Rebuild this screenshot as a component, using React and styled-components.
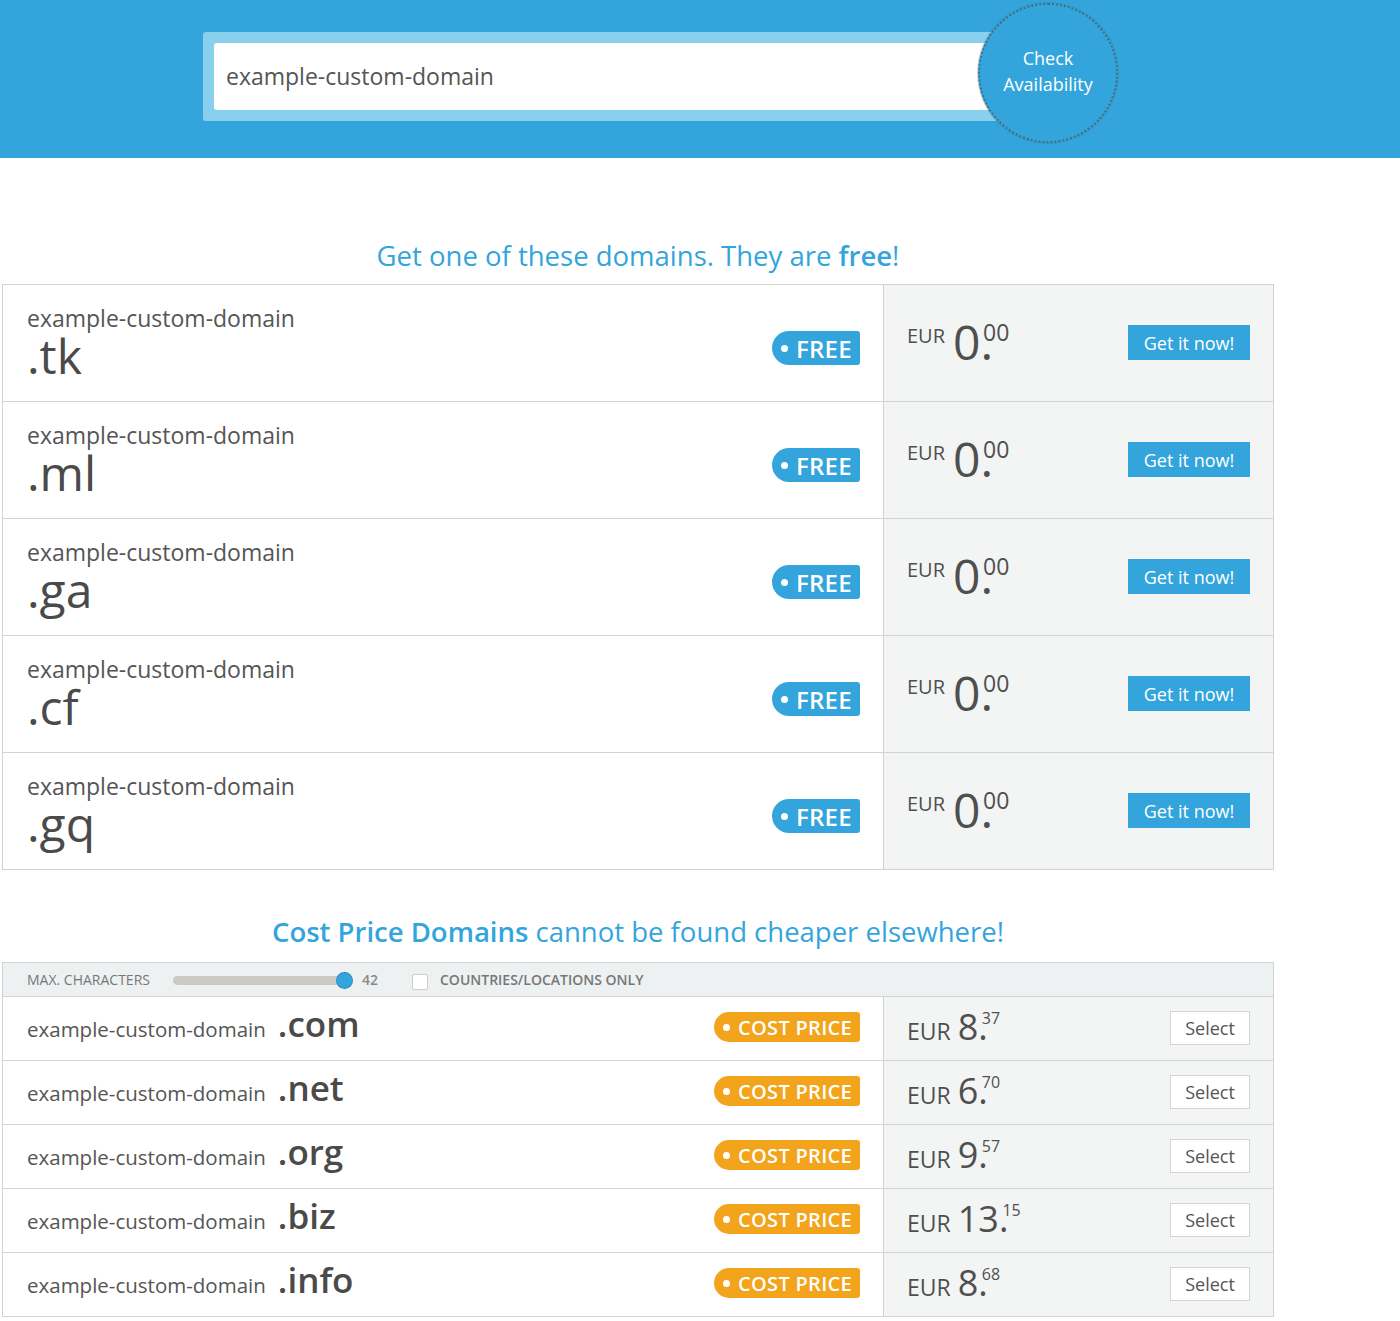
import React from "react";
import styled, { createGlobalStyle } from "styled-components";

const Global = createGlobalStyle`
  html, body { margin: 0; padding: 0; background: #fff; }
  body { font-family: "Open Sans", "Noto Sans", sans-serif; color: #555; }
  * { box-sizing: border-box; }
`;

const BLUE = "#33a5dc";
const ORANGE = "#f2a41c";

const Header = styled.header`
  height: 158px;
  background: ${BLUE};
  display: flex;
  align-items: center;
  padding-left: 203px;
`;

const SearchFrame = styled.div`
  width: 797px;
  height: 89px;
  margin-top: -6px;
  background: #88d0ee;
  border-radius: 3px;
  padding: 11px 10px 11px 11px;
`;

const SearchInput = styled.div`
  height: 100%;
  background: #fff;
  border-radius: 3px;
  display: flex;
  align-items: center;
  padding-left: 12px;
  font-size: 23px;
  color: #555;
`;

const CheckButton = styled.div`
  width: 140px;
  height: 140px;
  margin-left: -22px;
  margin-top: -12px;
  padding-bottom: 4px;
  border-radius: 50%;
  background: ${BLUE};
  border: 2px dotted rgba(70, 70, 70, 0.55);
  box-shadow: 0 0 0 1px rgba(90, 90, 90, 0.25);
  display: flex;
  align-items: center;
  justify-content: center;
  text-align: center;
  color: #fff;
  font-size: 18px;
  line-height: 26px;
  position: relative;
  z-index: 1;
`;

const Main = styled.main`
  width: 1274px;
  padding-left: 2px;
`;

const Heading = styled.h2`
  margin: ${(p) => p.$mt}px 0 ${(p) => p.$mb}px;
  text-align: center;
  font-weight: 400;
  font-size: 27.5px;
  line-height: 40px;
  color: ${BLUE};
  b { font-weight: 600; }
`;

const Table = styled.div`
  border-top: 1px solid #d2d2d2;
  border-left: 1px solid #d2d2d2;
  border-right: 1px solid #d2d2d2;
`;

const Row = styled.div`
  display: grid;
  grid-template-columns: 881px 1fr;
  height: ${(p) => p.$h}px;
  border-bottom: 1px solid #d2d2d2;
`;

const LeftCell = styled.div`
  display: flex;
  align-items: center;
  justify-content: space-between;
  padding: 0 23px 0 24px;
  border-right: 1px solid #d2d2d2;
  background: #fff;
`;

const NameStack = styled.div`
  display: flex;
  flex-direction: column;
  margin-bottom: 2px;
`;

const NameInline = styled.div`
  display: flex;
  align-items: baseline;
  gap: 12px;
  margin-bottom: 10px;
`;

const DomainName = styled.span`
  font-size: ${(p) => p.$size}px;
  line-height: ${(p) => p.$lh}px;
  color: #555;
`;

const Tld = styled.span`
  font-size: ${(p) => p.$size}px;
  line-height: ${(p) => p.$lh}px;
  font-weight: ${(p) => p.$weight};
  color: #4a4a4a;
`;

const Tag = styled.span`
  display: inline-flex;
  align-items: center;
  gap: 8px;
  height: ${(p) => p.$h}px;
  padding: 0 8px 0 9px;
  margin-top: ${(p) => p.$mt}px;
  background: ${(p) => p.$color};
  color: #fff;
  border-radius: ${(p) => p.$h / 2}px 3px 3px ${(p) => p.$h / 2}px;
  font-size: ${(p) => p.$fs}px;
  font-weight: 600;
  letter-spacing: 0.3px;
  &::before {
    content: "";
    width: 7px;
    height: 7px;
    border-radius: 50%;
    background: #fff;
  }
`;

const RightCell = styled.div`
  display: flex;
  align-items: center;
  justify-content: space-between;
  padding: 0 23px 0 23px;
  background: #f3f5f5;
`;

const Price = styled.div`
  display: flex;
  align-items: ${(p) => (p.$top ? "flex-start" : "baseline")};
  color: #4f4f4f;
  margin-bottom: ${(p) => p.$mb}px;
`;

const Currency = styled.span`
  font-size: ${(p) => p.$size}px;
  line-height: ${(p) => p.$lh}px;
  margin-right: ${(p) => p.$gap}px;
  margin-top: ${(p) => p.$mt || 0}px;
`;

const Amount = styled.span`
  display: inline-flex;
  align-items: flex-start;
`;

const Whole = styled.span`
  font-size: ${(p) => p.$size}px;
  line-height: ${(p) => p.$lh}px;
`;

const Cents = styled.span`
  font-size: ${(p) => p.$size}px;
  line-height: ${(p) => p.$lh}px;
  margin-left: ${(p) => p.$ml}px;
  margin-top: ${(p) => p.$mt}px;
`;

const GetButton = styled.button`
  width: 122px;
  height: 35px;
  border: none;
  background: ${BLUE};
  color: #fff;
  font-family: inherit;
  font-size: 18px;
  padding: 0;
  margin-bottom: 1px;
`;

const SelectButton = styled.button`
  width: 80px;
  height: 34px;
  border: 1px solid #d5d5d5;
  background: #fff;
  color: #555;
  font-family: inherit;
  font-size: 18px;
  padding: 0;
  margin-bottom: 1px;
`;

const FilterBar = styled.div`
  height: 34px;
  display: flex;
  align-items: center;
  padding-left: 24px;
  background: #eef1f1;
  border-bottom: 1px solid #d2d2d2;
  font-size: 14px;
  color: #777;
`;

const FilterLabel = styled.span`
  text-transform: uppercase;
  font-weight: ${(p) => (p.$bold ? 600 : 400)};
`;

const Track = styled.span`
  width: 171px;
  height: 9px;
  margin-left: 23px;
  border-radius: 5px;
  background: #cdcac6;
  position: relative;
  display: inline-block;
  margin-top: 2px;
`;

const Thumb = styled.span`
  position: absolute;
  right: -9px;
  top: -4px;
  width: 17px;
  height: 17px;
  border-radius: 50%;
  background: ${BLUE};
  border: 1px dotted #2a6f97;
`;

const TrackValue = styled.span`
  margin-left: 18px;
  font-weight: 600;
  color: #888;
`;

const Checkbox = styled.span`
  width: 16px;
  height: 16px;
  margin: 4px 12px 0 34px;
  border: 1px solid #ccc;
  background: #fff;
  border-radius: 2px;
`;

const freeTlds = [".tk", ".ml", ".ga", ".cf", ".gq"];
const costTlds = [
  [".com", "8", "37"],
  [".net", "6", "70"],
  [".org", "9", "57"],
  [".biz", "13", "15"],
  [".info", "8", "68"],
];

export default function App() {
  return (
    <>
      <Global />
      <Header>
        <SearchFrame>
          <SearchInput>example-custom-domain</SearchInput>
        </SearchFrame>
        <CheckButton>
          Check
          <br />
          Availability
        </CheckButton>
      </Header>
      <Main>
        <Heading $mt={78} $mb={8}>
          Get one of these domains. They are <b>free</b>!
        </Heading>
        <Table>
          {freeTlds.map((t) => (
            <Row key={t} $h={117}>
              <LeftCell>
                <NameStack>
                  <DomainName $size={23} $lh={28}>example-custom-domain</DomainName>
                  <Tld $size={48} $lh={48} $weight={400}>{t}</Tld>
                </NameStack>
                <Tag $color={BLUE} $h={34} $fs={24} $mt={10}>FREE</Tag>
              </LeftCell>
              <RightCell>
                <Price $top $mb={2}>
                  <Currency $size={20} $lh={24} $gap={8} $mt={4}>EUR</Currency>
                  <Amount>
                    <Whole $size={48} $lh={44}>0.</Whole>
                    <Cents $size={23} $lh={24} $ml={-10} $mt={0}>00</Cents>
                  </Amount>
                </Price>
                <GetButton>Get it now!</GetButton>
              </RightCell>
            </Row>
          ))}
        </Table>
        <Heading $mt={42} $mb={10}>
          <b>Cost Price Domains</b> cannot be found cheaper elsewhere!
        </Heading>
        <Table>
          <FilterBar>
            <FilterLabel>Max. characters</FilterLabel>
            <Track>
              <Thumb />
            </Track>
            <TrackValue>42</TrackValue>
            <Checkbox />
            <FilterLabel $bold>Countries/locations only</FilterLabel>
          </FilterBar>
          {costTlds.map(([t, w, c]) => (
            <Row key={t} $h={64}>
              <LeftCell>
                <NameInline>
                  <DomainName $size={20.5} $lh={28}>example-custom-domain</DomainName>
                  <Tld $size={35} $lh={40} $weight={600}>{t}</Tld>
                </NameInline>
                <Tag $color={ORANGE} $h={30} $fs={20} $mt={-3}>COST PRICE</Tag>
              </LeftCell>
              <RightCell>
                <Price $mb={2}>
                  <Currency $size={23} $lh={30} $gap={7}>EUR</Currency>
                  <Amount>
                    <Whole $size={36} $lh={36}>{w}.</Whole>
                    <Cents $size={16} $lh={16} $ml={-6} $mt={1}>{c}</Cents>
                  </Amount>
                </Price>
                <SelectButton>Select</SelectButton>
              </RightCell>
            </Row>
          ))}
        </Table>
      </Main>
    </>
  );
}
